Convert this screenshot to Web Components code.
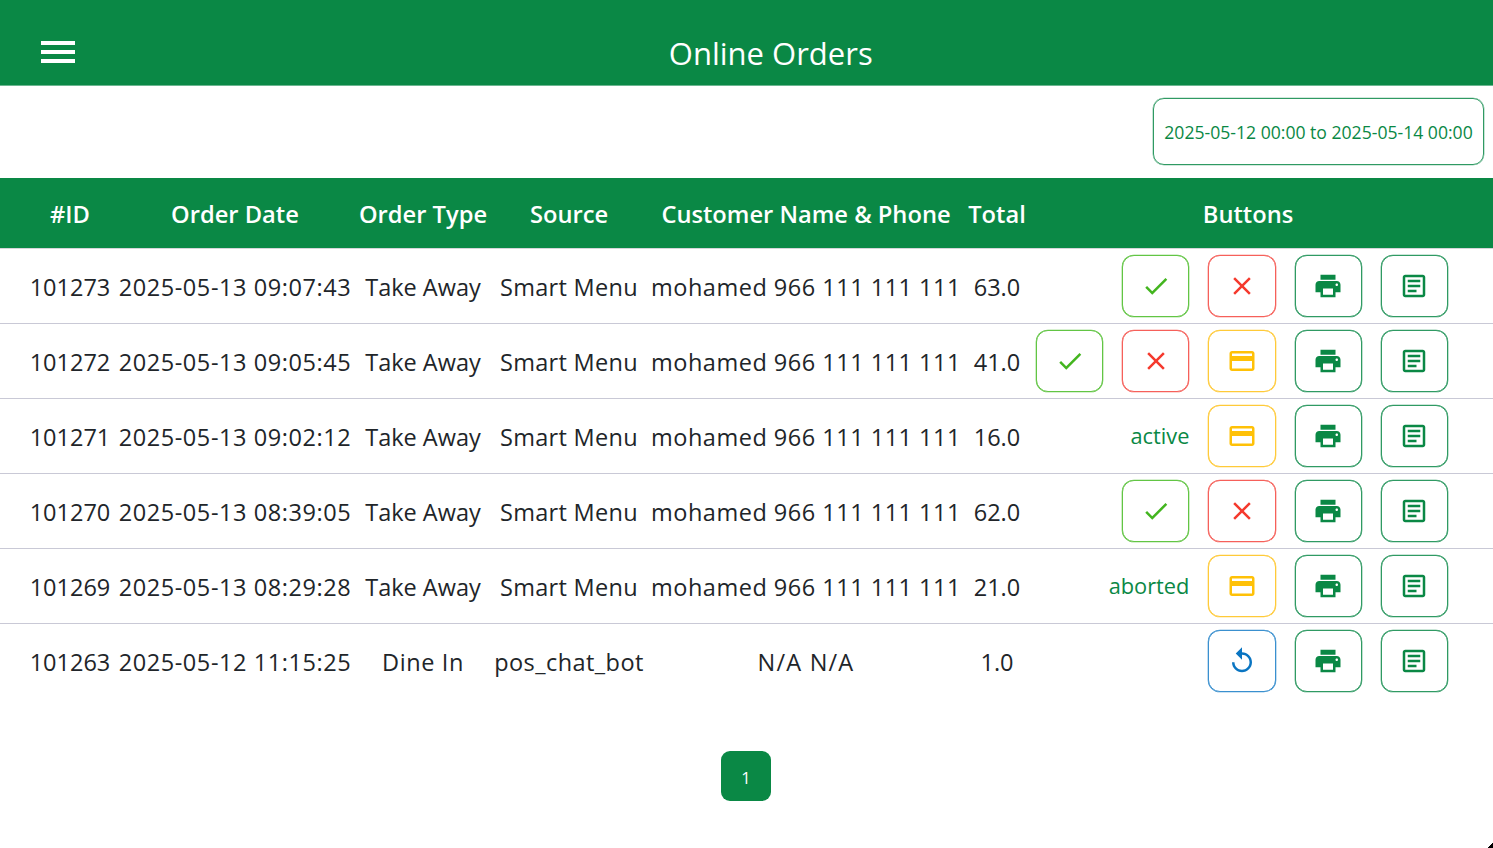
<!DOCTYPE html>
<html>
<head>
<meta charset="utf-8">
<title>Online Orders</title>
<style>
  html, body { margin: 0; height: 100%; background: #fff; overflow: hidden; }
  body { font-family: "Open Sans", "Noto Sans", sans-serif; color: #212529; position: relative; }
</style>
</head>
<body>
<app-bar title="Online Orders"></app-bar>
<date-filter>2025-05-12 00:00 to 2025-05-14 00:00</date-filter>
<orders-head></orders-head>
<order-row oid="101273" date="2025-05-13 09:07:43" type="Take Away" source="Smart Menu" customer="mohamed 966 111 111 111" total="63.0" actions="check close print note"></order-row>
<order-row oid="101272" date="2025-05-13 09:05:45" type="Take Away" source="Smart Menu" customer="mohamed 966 111 111 111" total="41.0" actions="check close card print note"></order-row>
<order-row oid="101271" date="2025-05-13 09:02:12" type="Take Away" source="Smart Menu" customer="mohamed 966 111 111 111" total="16.0" status="active" actions="card print note"></order-row>
<order-row oid="101270" date="2025-05-13 08:39:05" type="Take Away" source="Smart Menu" customer="mohamed 966 111 111 111" total="62.0" actions="check close print note"></order-row>
<order-row oid="101269" date="2025-05-13 08:29:28" type="Take Away" source="Smart Menu" customer="mohamed 966 111 111 111" total="21.0" status="aborted" actions="card print note"></order-row>
<order-row oid="101263" date="2025-05-12 11:15:25" type="Dine In" source="pos_chat_bot" customer="N/A N/A" total="1.0" actions="replay print note" last></order-row>
<page-nav></page-nav>
<screen-corner></screen-corner>

<script>
// Shared column widths for the head and the rows
const COLUMNS = '96px 234px 142px 150px 324px 58px 444px';

const ICONS = {
  check: 'M9 16.17L4.83 12l-1.42 1.41L9 19 21 7l-1.41-1.41z',
  close: 'M19 6.41L17.59 5 12 10.59 6.41 5 5 6.41 10.59 12 5 17.59 6.41 19 12 13.41 17.59 19 19 17.59 13.41 12z',
  card: 'M20 4H4c-1.11 0-1.99.89-1.99 2L2 18c0 1.11.89 2 2 2h16c1.11 0 2-.89 2-2V6c0-1.11-.89-2-2-2zm0 14H4v-6h16v6zm0-10H4V6h16v2z',
  print: 'M19 8H5c-1.66 0-3 1.34-3 3v6h4v4h12v-4h4v-6c0-1.66-1.34-3-3-3zm-3 11H8v-5h8v5zm3-7c-.55 0-1-.45-1-1s.45-1 1-1 1 .45 1 1-.45 1-1 1zm-1-9H6v4h12V3z',
  note: 'M19 5v14H5V5h14m0-2H5c-1.1 0-2 .9-2 2v14c0 1.1.9 2 2 2h14c1.1 0 2-.9 2-2V5c0-1.1-.9-2-2-2zM14 17H7v-2h7v2zm3-4H7v-2h10v2zm0-4H7V7h10v2z',
  replay: 'M12 5V1L7 6l5 5V7c3.31 0 6 2.69 6 6s-2.69 6-6 6-6-2.69-6-6H4c0 4.42 3.58 8 8 8s8-3.58 8-8-3.58-8-8-8z'
};

const ICON_COLORS = {
  check: ['#43b51f', '#62c544'],
  close: ['#f5392d', '#f6605a'],
  card: ['#ffc107', '#ffca38'],
  print: ['#0a8845', '#2f9a63'],
  note: ['#0a8845', '#2f9a63'],
  replay: ['#0a75c2', '#3a90cf']
};

class AppBar extends HTMLElement {
  connectedCallback() {
    const root = this.attachShadow({ mode: 'open' });
    root.innerHTML = `
      <style>
        :host { display: flex; height: 85px; box-sizing: content-box; background: #0a8845; border-bottom: 1px solid #6bb690; color: #fff; align-items: center; padding-left: 41px; }
        .burger { display: flex; flex-direction: column; gap: 5.5px; width: 33.5px; margin-top: 19px; }
        .burger span { height: 3.5px; background: #fff; }
        h1 { flex: 1; margin: 20px 0 0 -7px; padding-right: 19px; text-align: center; font-size: 31px; font-weight: 400; }
      </style>
      <div class="burger"><span></span><span></span><span></span></div>
      <h1>${this.getAttribute('title')}</h1>`;
  }
}

class DateFilter extends HTMLElement {
  connectedCallback() {
    const root = this.attachShadow({ mode: 'open' });
    root.innerHTML = `
      <style>
        :host { display: flex; justify-content: flex-end; height: 92px; padding: 12px 9px 0 0; box-sizing: border-box; }
        .box { width: 331px; height: 67px; box-sizing: border-box; border: 1px solid #2f9a63; border-radius: 11px; box-shadow: 0 0 0 0.3px #4ba677; color: #0a8845; font-size: 17.6px; display: flex; align-items: center; justify-content: center; white-space: nowrap; }
      </style>
      <div class="box"><slot></slot></div>`;
  }
}

class OrdersHead extends HTMLElement {
  connectedCallback() {
    const root = this.attachShadow({ mode: 'open' });
    const titles = ['#ID', 'Order Date', 'Order Type', 'Source', 'Customer Name &amp; Phone', 'Total', 'Buttons'];
    root.innerHTML = `
      <style>
        :host { display: grid; grid-template-columns: ${COLUMNS}; padding-left: 22px; height: 70px; background: #0a8845; border-bottom: 1px solid #d5d5da; color: #fff; font-size: 23.7px; font-weight: 600; align-items: center; }
        div { text-align: center; white-space: nowrap; padding-top: 2px; }
      </style>
      ${titles.map(t => `<div>${t}</div>`).join('')}`;
  }
}

class ActionButton extends HTMLElement {
  connectedCallback() {
    const root = this.attachShadow({ mode: 'open' });
    const kind = this.getAttribute('kind');
    const [color, border] = ICON_COLORS[kind];
    root.innerHTML = `
      <style>
        :host { display: flex; width: 67.2px; height: 62px; box-sizing: border-box; border: 1px solid ${border}; box-shadow: 0 0 0 0.3px ${border}; border-radius: 12px; align-items: center; justify-content: center; background: #fff; }
        svg { width: 30px; height: 30px; fill: ${color}; display: block; }
      </style>
      <svg viewBox="0 0 24 24"><path d="${ICONS[kind]}"/></svg>`;
  }
}

class OrderRow extends HTMLElement {
  connectedCallback() {
    const root = this.attachShadow({ mode: 'open' });
    const cells = ['oid', 'date', 'type', 'source', 'customer', 'total'];
    const status = this.getAttribute('status');
    const actions = this.getAttribute('actions').split(' ');
    root.innerHTML = `
      <style>
        :host { display: grid; grid-template-columns: ${COLUMNS}; padding-left: 22px; height: 75px; box-sizing: border-box; padding-bottom: 1px; border-bottom: 1px solid #c9c9d6; font-size: 23.5px; color: #212529; align-items: center; }
        :host([last]) { border-bottom-color: transparent; }
        .cell { text-align: center; white-space: nowrap; padding-top: 2px; }
        .date { letter-spacing: 0.58px; }
        .source { letter-spacing: 0.3px; }
        .customer { letter-spacing: 0.5px; }
        :host([last]) .type { letter-spacing: 0.6px; }
        :host([last]) .source { letter-spacing: 0.45px; }
        :host([last]) .customer { letter-spacing: 1.2px; }
        .actions { display: flex; justify-content: flex-end; align-items: center; gap: 19px; padding-right: 22px; }
        .status { color: #0a8845; font-size: 21.8px; }
      </style>
      ${cells.map(c => `<div class="cell ${c}">${this.getAttribute(c)}</div>`).join('')}
      <div class="actions">
        ${status ? `<span class="status">${status}</span>` : ''}
        ${actions.map(a => `<action-button kind="${a}"></action-button>`).join('')}
      </div>`;
  }
}

class PageNav extends HTMLElement {
  connectedCallback() {
    const root = this.attachShadow({ mode: 'open' });
    root.innerHTML = `
      <style>
        :host { display: flex; justify-content: center; padding: 52px 1px 0 0; }
        .page { width: 50px; height: 50px; box-sizing: border-box; padding-top: 3px; border-radius: 9px; background: #0a8845; color: #fff; font-size: 16.5px; display: flex; align-items: center; justify-content: center; }
      </style>
      <div class="page">1</div>`;
  }
}

// Rounded corner of the device screen, lies over the page
class ScreenCorner extends HTMLElement {
  connectedCallback() {
    const root = this.attachShadow({ mode: 'open' });
    root.innerHTML = `
      <style>
        :host { position: absolute; right: 0; bottom: 0; width: 6px; height: 6px; background: linear-gradient(to bottom right, transparent 50%, #000 50%); }
      </style>`;
  }
}

customElements.define('app-bar', AppBar);
customElements.define('date-filter', DateFilter);
customElements.define('orders-head', OrdersHead);
customElements.define('action-button', ActionButton);
customElements.define('order-row', OrderRow);
customElements.define('page-nav', PageNav);
customElements.define('screen-corner', ScreenCorner);
</script>
</body>
</html>
